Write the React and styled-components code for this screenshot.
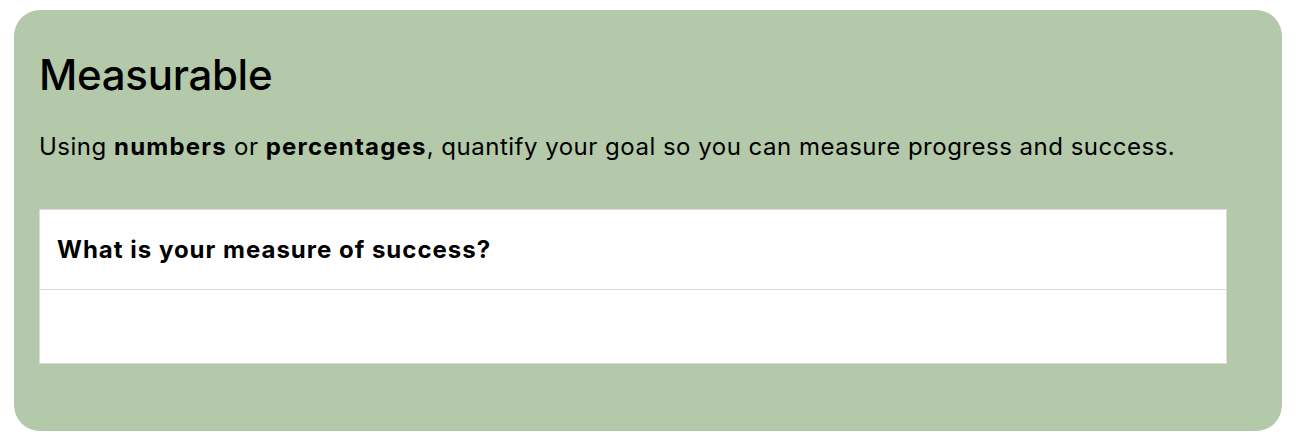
import React from "react";
import styled, { createGlobalStyle } from "styled-components";

const Global = createGlobalStyle`
  html, body { margin: 0; padding: 0; background: #ffffff; }
  body { font-family: Inter, "Helvetica Neue", Arial, sans-serif; color: #000; }
`;

const Page = styled.div`
  padding: 10px 14px 13px 14px;
`;

const Card = styled.section`
  background: #b3c9aa;
  border-radius: 26px;
  padding: 40px 55px 67px 25px;
`;

const Title = styled.h2`
  margin: 0;
  font-size: 42px;
  font-weight: 500;
  line-height: 50px;
  letter-spacing: -0.3px;
`;

const Lead = styled.p`
  margin: 32px 0 0 0;
  font-size: 24px;
  line-height: 30px;
  font-weight: 400;
  letter-spacing: 0.5px;
`;

const Strong = styled.b`
  font-weight: 700;
  letter-spacing: 1.2px;
`;

const Field = styled.div`
  margin-top: 47px;
  background: #fff;
  border: 1px solid #dcdcdc;
`;

const FieldLabel = styled.label`
  display: block;
  padding: 0 17px;
  height: 79px;
  line-height: 79px;
  font-size: 24px;
  font-weight: 700;
  letter-spacing: 1px;
  border-bottom: 1px solid #dcdcdc;
`;

const Answer = styled.textarea`
  display: block;
  width: 100%;
  box-sizing: border-box;
  height: 73px;
  border: 0;
  resize: none;
  outline: none;
  padding: 16px 17px;
  font: inherit;
  font-size: 22px;
  background: #fff;
`;

export default function App() {
  return (
    <>
      <Global />
      <Page>
        <Card>
          <Title>Measurable</Title>
          <Lead>
            Using <Strong>numbers</Strong> or <Strong>percentages</Strong>, quantify your goal so you can measure progress and success.
          </Lead>
          <Field>
            <FieldLabel htmlFor="measure">What is your measure of success?</FieldLabel>
            <Answer id="measure" />
          </Field>
        </Card>
      </Page>
    </>
  );
}
